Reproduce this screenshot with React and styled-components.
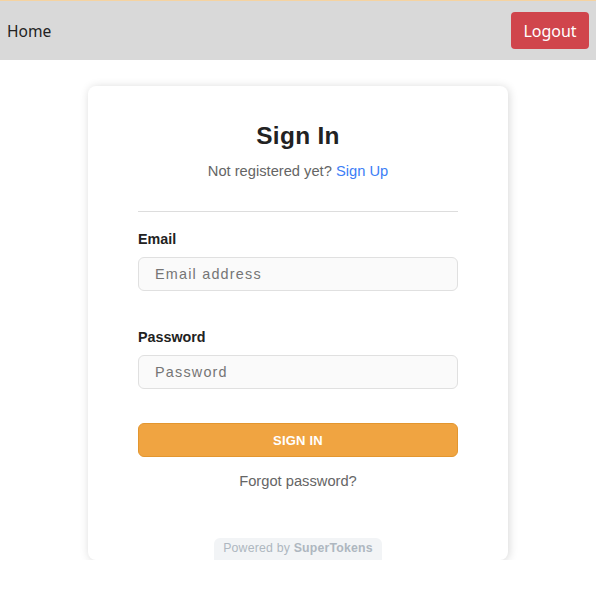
import React from "react";
import styled, { createGlobalStyle } from "styled-components";

const Global = createGlobalStyle`
  html, body { margin: 0; padding: 0; background: #ffffff; }
  body { font-family: "Liberation Sans", Arial, sans-serif; }
  * { box-sizing: border-box; }
`;

const Nav = styled.nav`
  height: 60px;
  background: #d9d9d9;
  border-top: 1px solid #f5d3a1;
  display: flex;
  align-items: center;
  justify-content: space-between;
  padding: 0 7px;
  font-family: "Noto Sans", "DejaVu Sans", sans-serif;
`;

const HomeLink = styled.span`
  font-size: 15.6px;
  color: #222;
`;

const LogoutButton = styled.button`
  width: 78px;
  height: 37px;
  border: none;
  border-radius: 4px;
  background: #d0454c;
  color: #fff;
  font-family: "Noto Sans", "DejaVu Sans", sans-serif;
  font-size: 16px;
  padding: 0;
`;

const Main = styled.main`
  display: flex;
  justify-content: center;
  padding-top: 26px;
`;

const Card = styled.div`
  width: 420px;
  background: #fff;
  border-radius: 8px;
  box-shadow: 1px 1px 10px rgba(0, 0, 0, 0.16);
  padding: 34px 50px 0;
  display: flex;
  flex-direction: column;
  align-items: stretch;
`;

const Title = styled.h1`
  margin: 0;
  text-align: center;
  font-size: 24.4px;
  font-weight: 700;
  color: #222;
  line-height: 31px;
  letter-spacing: 0.3px;
`;

const Subtitle = styled.div`
  margin-top: 10px;
  text-align: center;
  font-size: 14.7px;
  color: #656565;
  line-height: 20px;
`;

const Link = styled.a`
  color: #3c7ef6;
  text-decoration: none;
`;

const Divider = styled.hr`
  margin: 30px 0 0;
  border: none;
  border-top: 1px solid #dddddd;
`;

const Field = styled.div`
  display: flex;
  flex-direction: column;
  margin-top: ${(p) => p.$top}px;
`;

const Label = styled.label`
  font-size: 14.3px;
  font-weight: 700;
  color: #222;
  line-height: 18px;
  margin-bottom: 9px;
`;

const Input = styled.input`
  height: 34px;
  border: 1px solid #e0e0e0;
  border-radius: 6px;
  background: #fafafa;
  padding: 0 16px;
  font-family: "Liberation Sans", Arial, sans-serif;
  font-size: 14.4px;
  letter-spacing: 1.2px;
  color: #222;
  outline: none;
  &::placeholder { color: #757575; }
`;

const SubmitButton = styled.button`
  margin-top: 34px;
  height: 34px;
  border: 1px solid #e3962f;
  border-radius: 6px;
  background: #f0a441;
  color: #fff;
  font-family: "Liberation Sans", Arial, sans-serif;
  font-size: 13px;
  font-weight: 700;
  letter-spacing: 0.2px;
`;

const Forgot = styled.div`
  margin-top: 15px;
  text-align: center;
  font-size: 14.7px;
  color: #656565;
  line-height: 18px;
`;

const PoweredWrap = styled.div`
  display: flex;
  justify-content: center;
  margin-top: 48px;
`;

const Powered = styled.div`
  background: #f2f4f6;
  border-radius: 6px 6px 0 0;
  padding: 4px 9px 5px;
  font-size: 12.3px;
  line-height: 13px;
  color: #aeb7c0;
  letter-spacing: 0.2px;
  b { font-weight: 700; }
`;

export default function App() {
  return (
    <>
      <Global />
      <Nav>
        <HomeLink>Home</HomeLink>
        <LogoutButton>Logout</LogoutButton>
      </Nav>
      <Main>
        <Card>
          <Title>Sign In</Title>
          <Subtitle>
            Not registered yet? <Link href="#">Sign Up</Link>
          </Subtitle>
          <Divider />
          <Field $top={18}>
            <Label>Email</Label>
            <Input placeholder="Email address" />
          </Field>
          <Field $top={37}>
            <Label>Password</Label>
            <Input type="password" placeholder="Password" />
          </Field>
          <SubmitButton>SIGN IN</SubmitButton>
          <Forgot>Forgot password?</Forgot>
          <PoweredWrap>
            <Powered>
              Powered by <b>SuperTokens</b>
            </Powered>
          </PoweredWrap>
        </Card>
      </Main>
    </>
  );
}
